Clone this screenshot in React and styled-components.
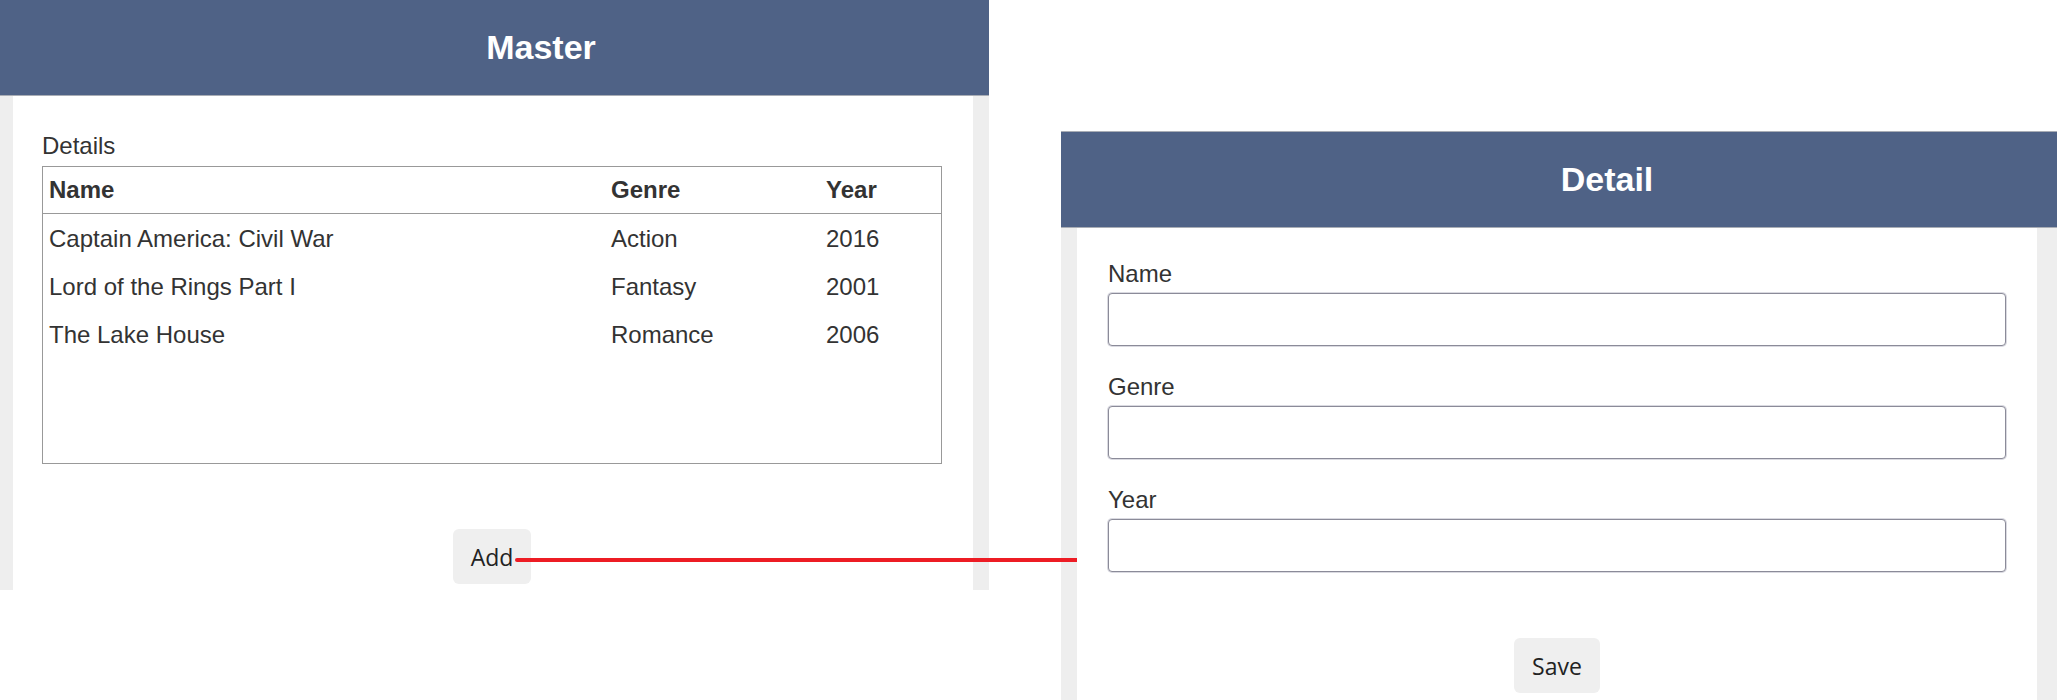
import React from "react";
import styled, { createGlobalStyle } from "styled-components";

const GlobalStyle = createGlobalStyle`
  html, body {
    margin: 0;
    padding: 0;
    overflow: hidden;
    background: #ffffff;
  }
  body {
    font-family: "Liberation Sans", Arial, sans-serif;
    color: #333333;
  }
`;

const Page = styled.div`
  position: relative;
  display: flex;
  align-items: flex-start;
  gap: 72px;
  margin-left: -3px;
  width: 2064px;
`;

const Panel = styled.section`
  display: flex;
  flex-direction: column;
  flex: none;
  width: ${(props) => props.$width}px;
  margin-top: ${(props) => props.$top}px;
`;

const Header = styled.header`
  height: 95px;
  display: flex;
  align-items: center;
  justify-content: center;
  padding-left: 96px;
  background: #4f6286;
  border-top: 1px solid #a9adb5;
  border-bottom: 1px solid #a9adb5;
`;

const Title = styled.h1`
  margin: 0;
  font-size: 34px;
  font-weight: 700;
  color: #ffffff;
`;

const Body = styled.div`
  box-sizing: border-box;
  height: ${(props) => props.$height}px;
  display: flex;
  flex-direction: column;
  padding: ${(props) => props.$padding};
  background: #ffffff;
  border-left: 16px solid #eeeeee;
  border-right: ${(props) => props.$bandRight || 16}px solid #eeeeee;
`;

const Caption = styled.div`
  font-size: 24px;
  line-height: 28px;
  margin-bottom: 6px;
`;

const ListBox = styled.div`
  box-sizing: border-box;
  height: 298px;
  border: 1px solid #999999;
  overflow: hidden;
`;

const Grid = styled.table`
  width: 100%;
  table-layout: fixed;
  border-collapse: collapse;
  font-size: 24px;
  line-height: 28px;
`;

const Th = styled.th`
  box-sizing: border-box;
  width: ${(props) => props.$w || "auto"};
  padding: 9px 6px;
  text-align: left;
  font-weight: 700;
  border-bottom: 1px solid #999999;
`;

const Td = styled.td`
  padding: 11px 6px 9px;
  white-space: nowrap;
`;

const Actions = styled.div`
  display: flex;
  justify-content: center;
  margin-top: ${(props) => props.$gap}px;
`;

const Button = styled.button`
  height: 55px;
  padding: 0 18px;
  border: none;
  border-radius: 6px;
  background: #efefef;
  color: #222222;
  font-family: "Open Sans", "Noto Sans", sans-serif;
  font-size: 23px;
  cursor: pointer;
`;

const Field = styled.label`
  display: flex;
  flex-direction: column;
  gap: 5px;
  margin-bottom: 27px;
  font-size: 24px;
  line-height: 28px;

  &:last-of-type {
    margin-bottom: 0;
  }
`;

const Input = styled.input`
  box-sizing: border-box;
  width: 100%;
  height: 53px;
  border: 1px solid #8b8b99;
  border-radius: 4px;
  box-shadow: 0 0 0 1px rgba(150, 150, 170, 0.35);
  background: #ffffff;
  font-family: "Liberation Sans", Arial, sans-serif;
  font-size: 24px;
  padding: 0 8px;
`;

const Connector = styled.svg`
  position: absolute;
  left: 518px;
  top: 558px;
  overflow: visible;
`;

const movies = [
  { name: "Captain America: Civil War", genre: "Action", year: 2016 },
  { name: "Lord of the Rings Part I", genre: "Fantasy", year: 2001 },
  { name: "The Lake House", genre: "Romance", year: 2006 },
];

const App = () => {
  return (
    <>
      <GlobalStyle />
      <Page>
        <Panel $width={992} $top={-1}>
          <Header>
            <Title>Master</Title>
          </Header>
          <Body $height={494} $padding="36px 31px 6px 29px">
            <Caption>Details</Caption>
            <ListBox>
              <Grid>
                <thead>
                  <tr>
                    <Th $w="562px">Name</Th>
                    <Th $w="215px">Genre</Th>
                    <Th>Year</Th>
                  </tr>
                </thead>
                <tbody>
                  {movies.map((m) => (
                    <tr key={m.name}>
                      <Td>{m.name}</Td>
                      <Td>{m.genre}</Td>
                      <Td>{m.year}</Td>
                    </tr>
                  ))}
                </tbody>
              </Grid>
            </ListBox>
            <Actions $gap={65}>
              <Button>Add</Button>
            </Actions>
          </Body>
        </Panel>

        <Panel $width={996} $top={131}>
          <Header>
            <Title>Detail</Title>
          </Header>
          <Body $height={480} $padding="32px 31px 0 31px" $bandRight={20}>
            <Field>
              Name
              <Input type="text" />
            </Field>
            <Field>
              Genre
              <Input type="text" />
            </Field>
            <Field>
              Year
              <Input type="text" />
            </Field>
            <Actions $gap={66}>
              <Button>Save</Button>
            </Actions>
          </Body>
        </Panel>

        <Connector width="562" height="4">
          <circle cx="2" cy="2" r="2" fill="#ed1c24" />
          <line x1="2" y1="2" x2="562" y2="2" stroke="#ed1c24" strokeWidth="4" />
        </Connector>
      </Page>
    </>
  );
};

export default App;
